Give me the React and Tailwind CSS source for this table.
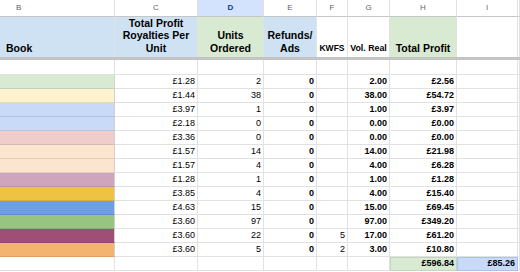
import React from "react";

const COLS = "grid-cols-[115px_83px_66px_53px_31px_42px_67px_61px_1fr]";

const rows = [
  { c: "#d9ead3", p: "£1.28", u: "2", f: "", v: "2.00", t: "£2.56" },
  { c: "#fff2cc", p: "£1.44", u: "38", f: "", v: "38.00", t: "£54.72" },
  { c: "#c9daf8", p: "£3.97", u: "1", f: "", v: "1.00", t: "£3.97" },
  { c: "#c9daf8", p: "£2.18", u: "0", f: "", v: "0.00", t: "£0.00" },
  { c: "#f0cccb", p: "£3.36", u: "0", f: "", v: "0.00", t: "£0.00" },
  { c: "#fbe5cf", p: "£1.57", u: "14", f: "", v: "14.00", t: "£21.98" },
  { c: "#fbe5cf", p: "£1.57", u: "4", f: "", v: "4.00", t: "£6.28" },
  { c: "#cfa5bd", p: "£1.28", u: "1", f: "", v: "1.00", t: "£1.28" },
  { c: "#eec344", p: "£3.85", u: "4", f: "", v: "4.00", t: "£15.40" },
  { c: "#709de8", p: "£4.63", u: "15", f: "", v: "15.00", t: "£69.45" },
  { c: "#98c481", p: "£3.60", u: "97", f: "", v: "97.00", t: "£349.20" },
  { c: "#9f4f76", p: "£3.60", u: "22", f: "5", v: "17.00", t: "£61.20" },
  { c: "#f2b46f", p: "£3.60", u: "5", f: "2", v: "3.00", t: "£10.80" },
];

const cell = "border-r border-b border-[#e2e2e2] box-border";

function Letter({ children, active }) {
  return (
    <div
      className={`${cell} border-b-[#c4c7c5] flex items-center justify-center text-[8px] ${
        active ? "bg-[#d3e3fd] text-[#0b3f91] font-bold" : "bg-white text-[#5f6368]"
      }`}
    >
      {children}
    </div>
  );
}

function Head({ bg, children, left }) {
  return (
    <div
      className={`${cell} border-b-0 flex flex-col justify-end pb-[3px] text-[10.5px] leading-[12.5px] font-bold text-black ${
        left ? "items-start pl-[6px]" : "items-center text-center"
      }`}
      style={{ backgroundColor: bg }}
    >
      {children}
    </div>
  );
}

function Num({ children, bold, bg }) {
  return (
    <div
      className={`${cell} flex items-end justify-end pr-[2px] pb-[1px] text-[9px] leading-[12px] text-black ${
        bold ? "font-bold" : ""
      }`}
      style={bg ? { backgroundColor: bg } : undefined}
    >
      {children}
    </div>
  );
}

export default function App() {
  return (
    <div
      className="w-[520px] h-[272px] overflow-hidden bg-white"
      style={{ fontFamily: '"Liberation Sans", Arial, sans-serif' }}
    >
      <div className={`grid ${COLS} grid-rows-[17px_40px_3px_15px_repeat(14,14px)]`}>
        {/* letter row */}
        <div className={`${cell} border-b-[#c4c7c5] flex items-center pl-[16px] text-[8px] text-[#5f6368]`}>B</div>
        <Letter>C</Letter>
        <Letter active>D</Letter>
        <Letter>E</Letter>
        <Letter>F</Letter>
        <Letter>G</Letter>
        <Letter>H</Letter>
        <Letter>I</Letter>
        <div className={`${cell} border-b-[#c4c7c5]`} />

        {/* header row */}
        <Head bg="#cfe2f3" left>Book</Head>
        <Head bg="#cfe2f3">
          <span>Total Profit</span>
          <span>Royalties Per</span>
          <span>Unit</span>
        </Head>
        <Head bg="#d9ead3">
          <span>Units</span>
          <span>Ordered</span>
        </Head>
        <Head bg="#cfe2f3">
          <span>Refunds/</span>
          <span>Ads</span>
        </Head>
        <div className={`${cell} border-b-0 flex items-end justify-center pb-[3px] text-[8.5px] leading-[12px] font-bold`}>KWFS</div>
        <div className={`${cell} border-b-0 flex items-end justify-center pb-[3px] text-[8.8px] leading-[12px] font-bold whitespace-nowrap`}>Vol. Real</div>
        <Head bg="#d9ead3">Total Profit</Head>
        <Head bg="#ffffff"></Head>
        <Head bg="#ffffff"></Head>

        {/* frozen divider */}
        <div className="col-span-9 bg-[#c4c4c4]" />

        {/* empty row */}
        {Array.from({ length: 9 }).map((_, i) => (
          <div key={i} className={cell} />
        ))}

        {/* data rows */}
        {rows.map((r, i) => (
          <React.Fragment key={i}>
            <div
              className="border-r border-r-[#d0d0d0] border-b border-b-black/10 box-border"
              style={{ backgroundColor: r.c }}
            />
            <Num>{r.p}</Num>
            <Num>{r.u}</Num>
            <Num bold>0</Num>
            <Num>{r.f}</Num>
            <Num bold>{r.v}</Num>
            <Num bold>{r.t}</Num>
            <Num></Num>
            <div className={cell} />
          </React.Fragment>
        ))}

        {/* totals row */}
        <div className={cell} />
        <div className={cell} />
        <div className={cell} />
        <div className={cell} />
        <div className={cell} />
        <div className={cell} />
        <div className={`border border-[#c3d6bb] box-border flex items-end justify-end pr-[2px] pb-[1px] text-[9px] leading-[12px] font-bold bg-[#d9ead3]`}>£596.84</div>
        <div className={`border border-[#a9c1ec] box-border flex items-end justify-end pr-[2px] pb-[1px] text-[9px] leading-[12px] font-bold bg-[#c9daf8]`}>£85.26</div>
        <div className={cell} />
      </div>
    </div>
  );
}
